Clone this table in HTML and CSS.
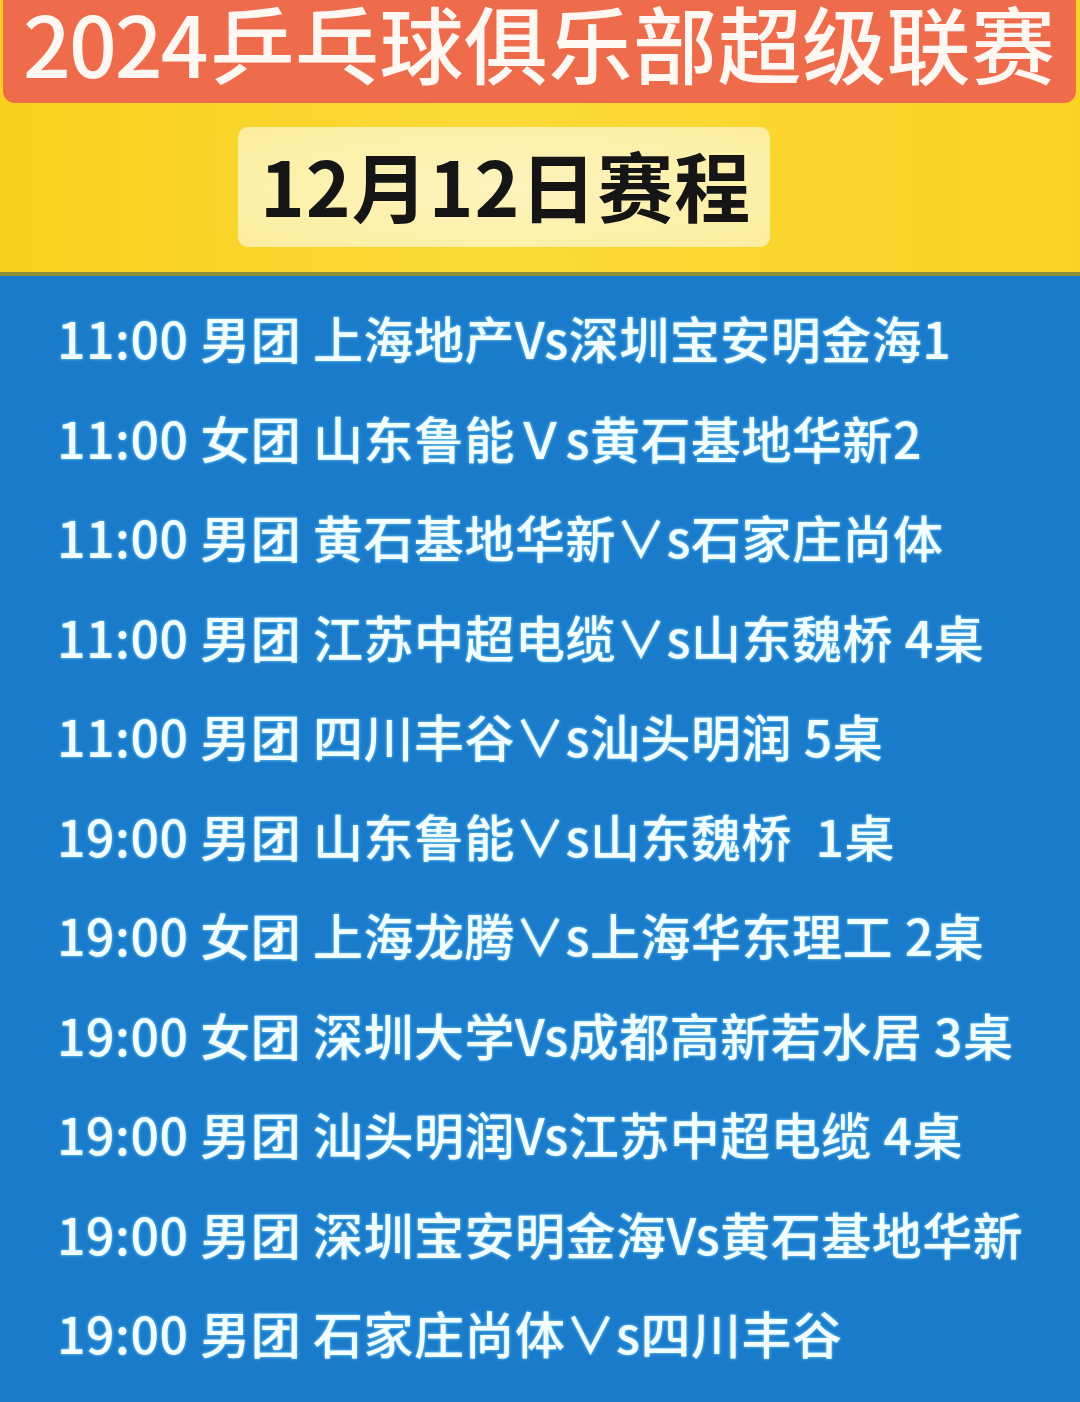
FILE: index.html
```html
<!DOCTYPE html>
<html lang="zh-CN">
<head>
<meta charset="utf-8">
<title>2024乒乓球俱乐部超级联赛 12月12日赛程</title>
<link rel="stylesheet" href="styles.css">
</head>
<body>
<div class="page">
  <div class="top">
    <div class="banner"><div class="title"><span class="num">2024</span><span class="cn">乒乓球俱乐部超级联赛</span></div></div>
    <div class="date-row"><div class="date-box">12月12日赛程</div></div>
  </div>
  <div class="schedule">
    <ul class="list">
      <li>11:00 男团 上海地产Vs深圳宝安明金海1</li>
      <li>11:00 女团 山东鲁能Ｖs黄石基地华新2</li>
      <li>11:00 男团 黄石基地华新∨s石家庄尚体</li>
      <li>11:00 男团 江苏中超电缆∨s山东魏桥 4桌</li>
      <li>11:00 男团 四川丰谷∨s汕头明润 5桌</li>
      <li>19:00 男团 山东鲁能∨s山东魏桥&nbsp; 1桌</li>
      <li>19:00 女团 上海龙腾∨s上海华东理工 2桌</li>
      <li>19:00 女团 深圳大学Vs成都高新若水居 3桌</li>
      <li>19:00 男团 汕头明润Vs江苏中超电缆 4桌</li>
      <li>19:00 男团 深圳宝安明金海Vs黄石基地华新</li>
      <li>19:00 男团 石家庄尚体∨s四川丰谷</li>
    </ul>
  </div>
</div>
</body>
</html>
```

FILE: styles.css
```css
html, body {
  margin: 0;
  padding: 0;
}
body {
  width: 1080px;
  height: 1402px;
  overflow: hidden;
  background: #1a7bcb;
  font-family: "Noto Sans CJK SC", "Noto Sans", sans-serif;
}
.page {
  display: flex;
  flex-direction: column;
  height: 1402px;
}
.top {
  height: 272px;
  background: linear-gradient(90deg, #f8d01e 0%, #fbd937 45%, #f9d226 100%);
  border-bottom: 4px solid #8a8f3c;
  box-sizing: content-box;
  display: flex;
  flex-direction: column;
  flex: none;
}
.banner {
  margin: 0 4px 0 3px;
  height: 103px;
  background: #ee6b4c;
  border-radius: 0 0 12px 12px;
  display: flex;
  align-items: flex-start;
  padding: 0 0 0 20px;
  box-sizing: border-box;
}
.title {
  margin: 0;
  color: #fff8f2;
  font-size: 84px;
  font-weight: 500;
  line-height: 84px;
  white-space: nowrap;
  display: flex;
  align-items: baseline;
}
.num {
  letter-spacing: -2px;
  margin-right: 4px;
}
.cn {
  letter-spacing: 0.5px;
}
.date-row {
  padding: 24px 0 0 238px;
}
.date-box {
  display: inline-flex;
  align-items: center;
  height: 120px;
  width: 532px;
  box-sizing: border-box;
  padding: 0 0 6px 22px;
  background: radial-gradient(ellipse at center, #fdf3bd 0%, #fcee9f 100%);
  border-radius: 10px;
  color: #151515;
  font-size: 76px;
  font-weight: 700;
  letter-spacing: 1px;
  white-space: nowrap;
}
.schedule {
  flex: 1;
  background: #1a7bcb;
  padding: 12px 0 0 57px;
}
.list {
  list-style: none;
  margin: 0;
  padding: 0;
}
.list li {
  height: 99.5px;
  line-height: 99.5px;
  color: #f2fdff;
  font-size: 50px;
  font-weight: 500;
  letter-spacing: 0.5px;
  white-space: nowrap;
  text-shadow: 0 0 3px rgba(150, 235, 255, 0.9);
}
```
